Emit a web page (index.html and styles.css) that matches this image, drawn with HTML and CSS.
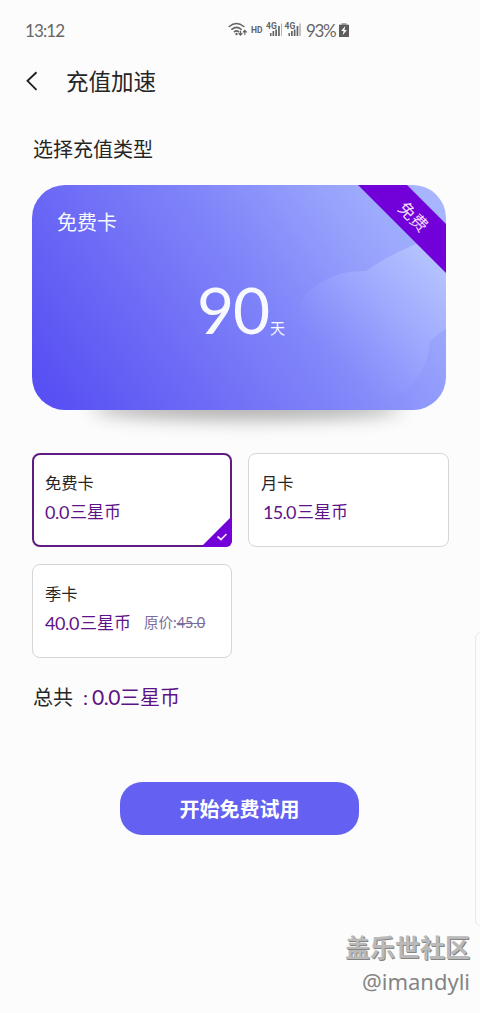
FILE: index.html
```html
<!DOCTYPE html>
<html lang="zh-CN">
<head>
<meta charset="utf-8">
<title>充值加速</title>
<link rel="stylesheet" href="styles.css">
</head>
<body>
<div class="screen">
  <header class="status">
    <span class="clock">13:12</span>
    <svg class="status-icons" width="76" height="20" viewBox="0 0 76 20">
      <g fill="none" stroke="#646464" stroke-width="1.500" stroke-linecap="round">
        <path d="M1.200 6.500Q8.500 .5 15.800 6.500M3.800 9.300Q8.500 5.400 13.200 9.300M6.300 11.800Q8.500 9.900 10.700 11.800"/>
        <path stroke-width="1.200" d="M12.500 11v4M11 13.500l1.500 1.700 1.500-1.700M16.800 14.500v-4M15.300 12l1.500-1.700 1.500 1.700"/>
      </g>
      <circle cx="8.500" cy="14" r="1.200" fill="#646464"/>
      <text class="hd" x="23" y="13">HD</text>
      <text class="net" x="38" y="9">4G</text>
      <text class="net" x="56.500" y="9">4G</text>
      <path fill="#646464" d="M42 13h1.500v3H42zM44.500 11h1.700v5h-1.700zM47.300 9.500h1.700V16h-1.700zM50.100 6h1.700v10h-1.700zM60.500 13H62v3h-1.500zM63 11h1.700v5H63zM65.800 9.500h1.700V16h-1.700zM68.600 6h1.700v10h-1.700z"/>
      <path stroke="#b5b5b5" d="M53.500 3.500V16"/>
      <path stroke="#8a8a8a" d="M72 3.500V16"/>
    </svg>
    <span class="percent">93%</span>
    <svg class="battery" width="10" height="14" viewBox="0 0 10 14">
      <path fill="#aaa" d="M2.500 0h5v2h-5z"/>
      <path fill="#5c5c5c" d="M0 1.700h10V14H0z"/>
      <path fill="#fff" d="M6.200 3L2.200 8h2.400l-.9 4.200L7.800 7H5.500z"/>
    </svg>
  </header>

  <nav class="bar">
    <svg width="12" height="20" viewBox="0 0 12 20"><path d="M10.500 1.200L1.500 9.800l9 9" fill="none" stroke="#202020" stroke-width="1.900"/></svg>
    <h1 class="title">充值加速</h1>
  </nav>

  <h2 class="heading">选择充值类型</h2>

  <section class="hero-wrap">
    <div class="hero">
      <svg class="hero-art" width="414" height="225" viewBox="0 0 414 225">
        <defs>
          <linearGradient id="disc" gradientUnits="userSpaceOnUse" x1="400" y1="75" x2="305" y2="175">
            <stop offset="0" stop-color="#b9c8ff" stop-opacity=".8"/>
            <stop offset=".5" stop-color="#a8b2ff" stop-opacity=".5"/>
            <stop offset="1" stop-color="#949cff" stop-opacity="0"/>
          </linearGradient>
        </defs>
        <path fill="url(#disc)" d="M270 115C284 96 307 85 334 86Q353 72 384 59L414 70V144Q405 149 398 157C394 190 378 208 350 216C302 224 255 164 270 115Z"/>
        <path fill="#7200d8" d="M326 0h49l39 39v49z"/>
      </svg>
      <span class="ribbon">免费</span>
      <p class="hero-name">免费卡</p>
      <p class="hero-days"><span class="days">90</span><span class="unit">天</span></p>
    </div>
  </section>

  <section class="plans">
    <article class="plan selected">
      <p class="name">免费卡</p>
      <p class="price"><span class="num">0.0</span>三星币</p>
      <svg class="tick" width="31" height="31" viewBox="0 0 31 31"><path fill="#7200d8" d="M31 0v25a6 6 0 0 1-6 6H0z"/><path d="M16.500 20.500l3.500 3 5.500-5.500" fill="none" stroke="#f5dfff" stroke-width="1.700"/></svg>
    </article>
    <article class="plan">
      <p class="name">月卡</p>
      <p class="price later"><span class="num mid">15.0</span>三星币</p>
    </article>
    <article class="plan">
      <p class="name">季卡</p>
      <p class="price"><span class="num wide">40.0</span>三星币<span class="was">原价:<s>45.0</s></span></p>
    </article>
  </section>

  <p class="total"><span class="total-label">总共</span><span class="colon">:</span><span class="total-num">0.0</span><span>三星币</span></p>

  <button class="start">开始免费试用</button>

  <footer class="credit">
    <p class="community">盖乐世社区</p>
    <p class="author">@imandyli</p>
  </footer>
  <div class="edge"></div>
</div>
</body>
</html>
```
FILE: styles.css
```css
* { box-sizing: border-box; }
body, p, h1, h2 { margin: 0; font-weight: 400; }
body { background: #fcfcfc; font-family: Lato, "Noto Sans CJK SC", sans-serif; }
svg { display: block; flex: none; }
.screen { position: relative; width: 480px; height: 1013px; overflow: hidden; display: flex; flex-direction: column; background: #fcfcfc; color: #252525; }

.status { display: flex; align-items: center; height: 60px; padding-left: 25px; color: #666; }
.clock { width: 203px; font-size: 17px; letter-spacing: -.9px; }
.hd { font: 700 8.500px Roboto, sans-serif; fill: #646464; }
.net { font: 700 8.500px Roboto, sans-serif; fill: #646464; }
.percent { width: 33px; margin-left: 2px; font-size: 17px; letter-spacing: -1.300px; }

.bar { display: flex; align-items: center; gap: 28px; height: 42px; padding-left: 26px; }
.title { padding-top: 2px; font-size: 22.500px; line-height: 42px; }
.heading { height: 83px; padding: 32px 0 0 33px; font-size: 20px; line-height: 30px; }

.hero-wrap { height: 268px; padding-left: 32px; }
.hero-wrap::after { content: ""; display: block; width: 310px; height: 24px; margin: -14px 0 0 60px; border-radius: 50%; background: rgba(0, 0, 0, .3); filter: blur(9px); }
.hero { position: relative; z-index: 1; width: 414px; height: 225px; padding: 21px 25px; border-radius: 33px; overflow: hidden; color: #f8f8ff; background: linear-gradient(55deg, #5850f3 5%, #6e6cf6 32%, #8085f9 55%, #98a4fc 79%, #aabaff 100%); }
.hero-art { position: absolute; inset: 0; }
.ribbon { position: absolute; left: 364px; top: 20px; font-size: 17px; line-height: 24px; color: #f4dcff; transform: rotate(45deg); }
.hero-name { position: relative; font-size: 20px; line-height: 32px; }
.hero-days { position: relative; display: flex; align-items: baseline; padding-left: 140px; height: 100px; margin-top: 27px; }
.days { width: 73px; font-size: 64px; line-height: 90px; letter-spacing: -1px; }
.unit { font-size: 15px; }

.plans { display: grid; grid-template-columns: 200px 201px; grid-auto-rows: 94px; gap: 17px 16px; padding-left: 32px; }
.plan { position: relative; padding: 17px 0 0 12px; border: 1px solid #d6d6d6; border-radius: 8px; background: #fff; }
.selected { padding: 16px 0 0 11px; border: 2px solid #5e1c80; }
.name { font-size: 16.300px; line-height: 24px; }
.price { display: flex; margin-top: 4px; color: #5e1288; font-size: 17px; line-height: 26px; }
.later { padding-left: 2px; }
.num { width: 25px; font-size: 18px; letter-spacing: -.4px; }
.mid { width: 34px; letter-spacing: -.7px; }
.wide { width: 35px; }
.was { margin-left: 13px; color: #7a6c9c; font-size: 14.500px; white-space: nowrap; }
.tick { position: absolute; right: -2px; bottom: -2px; }

.total { display: flex; align-items: center; height: 78px; padding-left: 33px; font-size: 20px; line-height: 78px; color: #5e1288; }
.total-label { width: 50px; color: #252525; }
.colon { width: 9px; }
.total-num { width: 28px; font-size: 21px; letter-spacing: -.5px; }

.start { flex: none; width: 239px; height: 53px; margin: 46px 0 0 120px; padding: 0; border: 0; border-radius: 22px; background: #6460f2; color: #fff; font: 700 20px "Noto Sans CJK SC", sans-serif; }

.credit { height: 70px; margin-top: 95px; padding-right: 10px; text-align: right; color: #858585; }
.community { font-size: 25px; font-weight: 700; line-height: 34px; color: #b9b9b9; text-shadow: 1px 1px 0 #858585; }
.author { font: 22px/34px "Noto Sans", sans-serif; }
.edge { position: absolute; left: 475px; top: 632px; width: 12px; height: 294px; border: 1px solid #e8e8e8; border-radius: 7px; }
```
